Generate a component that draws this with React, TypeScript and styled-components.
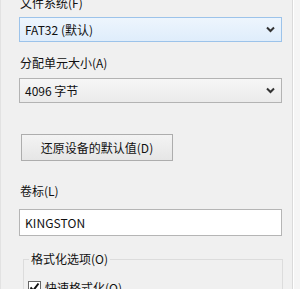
import React from "react";
import styled, { createGlobalStyle } from "styled-components";

const Global = createGlobalStyle`
  html, body { margin: 0; padding: 0; background: #f5f5f5; }
  body { width: 300px; height: 289px; overflow: hidden; }
  * { box-sizing: border-box; }
`;

const Window = styled.div`
  width: 293px;
  height: 330px;
  background: #f0f0f0;
  border-left: 1px solid #e2e2e2;
  border-right: 1px solid #dadada;
  box-shadow: 1px 0 0 #ffffff;
  margin-top: -5px;
  padding-left: 18px;
  display: flex;
  flex-direction: column;
  font-family: "Noto Sans CJK SC", "Noto Sans", sans-serif;
  font-size: 12px;
  color: #111;
  & > * { flex-shrink: 0; }
`;

const Label = styled.div<{ $top: number }>`
  height: 16px;
  line-height: 16px;
  margin-top: ${(p) => p.$top}px;
  padding-left: 1px;
  white-space: nowrap;
`;

const Combo = styled.div<{ $hot?: boolean; $top: number }>`
  margin-top: ${(p) => p.$top}px;
  width: 263px;
  height: 25px;
  display: flex;
  align-items: center;
  justify-content: space-between;
  padding: 0 6px 0 5px;
  border: 1px solid ${(p) => (p.$hot ? "#9cc3ea" : "#b3b3b3")};
  background: ${(p) =>
    p.$hot
      ? "linear-gradient(#edf5fd, #dfedfb)"
      : "linear-gradient(#f6f6f6, #ebebeb)"};
  white-space: nowrap;
`;

const Chevron = () => (
  <svg width="9" height="7" viewBox="0 0 9 7">
    <polyline points="1,1.5 4.5,5 8,1.5" fill="none" stroke="#333" strokeWidth="2" />
  </svg>
);

const Button = styled.div`
  margin-top: 31px;
  margin-left: 2px;
  width: 152px;
  height: 27px;
  display: flex;
  align-items: center;
  justify-content: center;
  border: 1px solid #adadad;
  background: linear-gradient(#f3f3f3, #e6e6e6);
  white-space: nowrap;
`;

const TextBox = styled.div`
  margin-top: 10px;
  width: 263px;
  height: 27px;
  display: flex;
  align-items: center;
  padding-left: 5px;
  background: #fff;
  border: 1px solid #b5b5b5;
  letter-spacing: 0.1px;
`;

const Group = styled.fieldset`
  margin: 15px 0 0 4px;
  width: 260px;
  padding: 13px 0 0 4px;
  border: 1px solid #dcdcdc;
  min-height: 60px;
`;

const Legend = styled.legend`
  padding: 0 2px;
  margin-left: 1px;
  height: 16px;
  line-height: 16px;
`;

const CheckRow = styled.label`
  display: flex;
  align-items: center;
  gap: 4px;
  height: 14px;
`;

const Box = styled.span`
  width: 13px;
  height: 13px;
  border: 1px solid #666;
  background: #fff;
  display: flex;
  align-items: center;
  justify-content: center;
`;

export default function App() {
  return (
    <>
      <Global />
      <Window>
        <Label $top={0}>文件系统(F)</Label>
        <Combo $hot $top={6}>
          <span>FAT32 (默认)</span>
          <Chevron />
        </Combo>
        <Label $top={13}>分配单元大小(A)</Label>
        <Combo $top={7}>
          <span>4096 字节</span>
          <Chevron />
        </Combo>
        <Button>还原设备的默认值(D)</Button>
        <Label $top={22}>卷标(L)</Label>
        <TextBox>KINGSTON</TextBox>
        <Group>
          <Legend>格式化选项(O)</Legend>
          <CheckRow>
            <Box>
              <svg width="11" height="11" viewBox="0 0 11 11">
                <polyline points="1.5,5.5 4.2,8.5 9.5,1.5" fill="none" stroke="#111" strokeWidth="2" />
              </svg>
            </Box>
            <span>快速格式化(Q)</span>
          </CheckRow>
        </Group>
      </Window>
    </>
  );
}
